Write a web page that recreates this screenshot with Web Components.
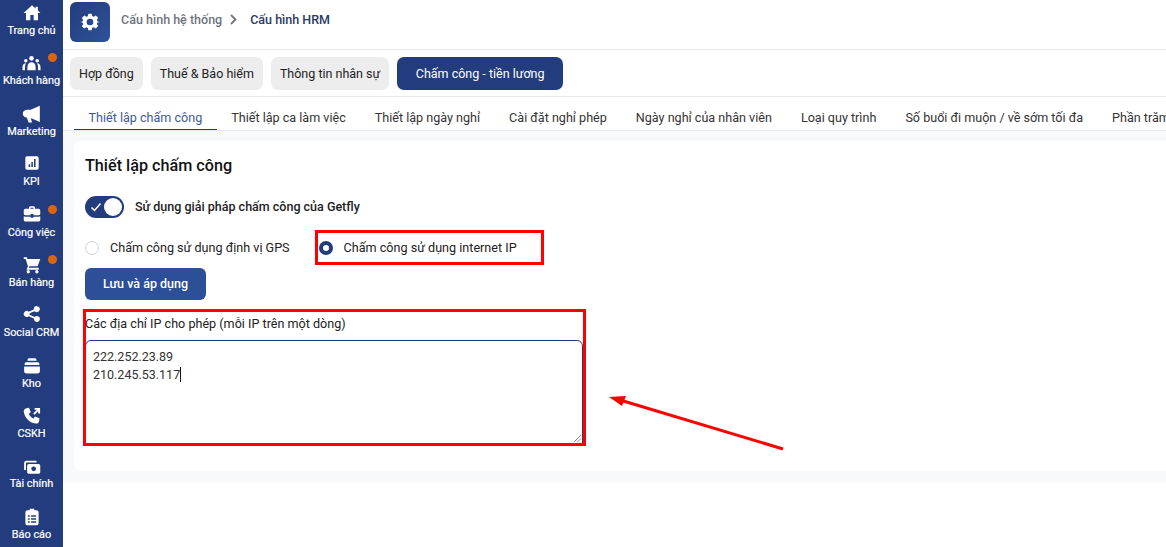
<!DOCTYPE html>
<html lang="vi"><head><meta charset="utf-8"><title>Cấu hình HRM</title>
<style>
html,body{margin:0;padding:0;height:547px;overflow:hidden;background:#fff;font-family:Roboto,"Liberation Sans",sans-serif}
</style></head><body>
<hrm-app></hrm-app>
<script>
const ICONS={
home:'<path d="M12 1.5.8 12h3.2v9.6h5.8v-6.8h4.400v6.8H20V12h3.200L19.800 8.800V3.600h-3v2.400z"/>',
users:'<circle cx="12" cy="5.500" r="2.900"/><circle cx="4.800" cy="8.600" r="2.200"/><circle cx="19.200" cy="8.600" r="2.200"/><path d="M6.800 20.500v-4.200c0-3.600 2.300-6 5.200-6s5.200 2.400 5.200 6v4.200z"/><path d="M5.200 11.600c-1 1.300-1.500 3-1.500 4.800v4H.6v-4c0-2.800 1.800-4.800 4.600-4.800zM18.800 11.600c1 1.300 1.500 3 1.500 4.800v4h3.100v-4c0-2.800-1.800-4.800-4.600-4.800z"/>',
mega:'<path d="M22.500 1v20.500L11 16.500l1.700 5.500H8.300L6 15.800C3 15.500 1 13.500 1 11s2-4.800 5-5h5z"/>',
kpi:'<path fill-rule="evenodd" d="M4.500 2h15A2.500 2.500 0 0 1 22 4.500v15a2.500 2.500 0 0 1-2.500 2.500h-15A2.500 2.500 0 0 1 2 19.500v-15A2.500 2.500 0 0 1 4.500 2zM7 14v4h2.300v-4zm4-3.500V18h2.300v-7.500zM15 6v12h2.300V6z"/>',
job:'<path fill-rule="evenodd" d="M8 5V3.500C8 2.400 8.900 1.500 10 1.500h4c1.100 0 2 .9 2 2V5h4.500C21.900 5 23 6.100 23 7.500V12a2 2 0 0 1-2 1.500h-7V12h-4v1.500H3A2 2 0 0 1 1 12V7.500C1 6.100 2.100 5 3.500 5zm2-1.500V5h4V3.500zM1 15c.6.300 1.300.5 2 .5h7V17h4v-1.500h7c.7 0 1.400-.2 2-.5v4.500c0 1.400-1.100 2.500-2.500 2.500h-17A2.500 2.500 0 0 1 1 19.500z"/>',
cart:'<path d="M1 1.500h4l1 2.500h17l-3.500 9.500H8.500l-1 2.200H21V18.200H4.700l1.900-4.400L3.500 4H1z"/><circle cx="7" cy="21" r="2.200"/><circle cx="18.500" cy="21" r="2.200"/>',
share:'<path d="M18.500 1.500a4 4 0 1 1-3 6.700L8.800 11c.1.600.1 1.300 0 1.900l6.700 3A4 4 0 1 1 14.500 18.500l-.1-.5-6.800-3a4 4 0 1 1 0-6.100l6.800-3v-.4a4 4 0 0 1 4.100-4z"/>',
box:'<path d="M8 1.500h8a2 2 0 0 1 2 2V5H6V3.500a2 2 0 0 1 2-2zM4 7h16c1 0 1.600.8 1.700 1.800l.2 1.700H2.100l.2-1.700C2.400 7.800 3 7 4 7zM1.500 12.500h21V19c0 1.700-1.300 3-3 3h-15c-1.700 0-3-1.300-3-3z"/>',
call:'<path d="M4.500 1.500 8 1l2.400 6-2.600 2c.9 2.800 3.300 5.200 6.200 6.200l2-2.600 6 2.400-.5 3.500c-.3 2-1.800 3.500-3.800 3.500C9 22 2 14.300 1 6.400c-.2-2.300 1.300-4.400 3.500-4.900z"/><path d="M14.500 9.500 21 3M15.500 2.500H21.500V8.500" fill="none" stroke="currentColor" stroke-width="2.600"/>',
money:'<path d="M4.500 3.500h13.500v2.500H5c-.6 0-1 .4-1 1v9H1.500V6.500c0-1.700 1.300-3 3-3z"/><path fill-rule="evenodd" d="M8 8h12.500c1.600 0 2.500 1 2.500 2.500v8c0 1.500-1 2.500-2.500 2.500H8c-1.500 0-2.500-1-2.500-2.500v-8C5.500 9 6.500 8 8 8zm6.200 3.200a3.200 3.200 0 1 0 0 6.400 3.200 3.200 0 0 0 0-6.400z"/>',
report:'<path fill-rule="evenodd" d="M9 1h6v2h3c1.600 0 2.800 1.200 2.800 2.800v14.400c0 1.600-1.200 2.800-2.800 2.800H6c-1.600 0-2.800-1.200-2.800-2.800V5.800C3.200 4.200 4.400 3 6 3h3zM6.500 9.500v2.300h2.400V9.500zm4.300 0v2.300h6.700V9.500zm-4.300 4v2.300h2.400v-2.300zm4.300 0v2.300h6.700v-2.300zm-4.300 4v2.300h2.400v-2.300zm4.300 0v2.300h6.700v-2.300z"/>'
};
function def(name,html){
  customElements.define(name,class extends HTMLElement{
    connectedCallback(){ if(this.shadowRoot)return;
      const r=this.attachShadow({mode:'open'});
      r.innerHTML=typeof html==='function'?html(this):html;
    }
  });
}
def('nav-item',el=>`<style>
:host{display:flex;flex-direction:column;align-items:center;height:50.4px;position:relative;color:#fff;font-size:10.900px;font-weight:400;line-height:13px;white-space:nowrap;-webkit-text-stroke:.2px #fff}
svg{width:var(--s,18px);height:var(--s,18px);fill:currentColor;margin-top:var(--t,5px);flex:none}
span{position:absolute;top:var(--l,24px);left:0;right:0;text-align:center}
i{position:absolute;left:48px;top:3px;width:9px;height:9px;border-radius:50%;background:#d9650f}
</style><svg viewBox="0 0 24 24">${ICONS[el.getAttribute('icon')]}</svg><span><slot></slot></span>${el.hasAttribute('dot')?'<i></i>':''}`);

def('side-nav',`<style>
:host{display:block;width:63px;height:547px;background:#233c7e;flex:none;box-sizing:border-box}
</style><slot></slot>`);

def('app-header',`<style>
:host{display:flex;align-items:flex-start;height:49px;box-sizing:border-box;padding:2px 0 0 7px;font-size:12.500px;font-weight:500;color:#6e7480}
.tile{width:40px;height:40px;border-radius:6px;background:linear-gradient(135deg,#233c7e,#2f5299);display:flex;align-items:center;justify-content:center;margin-right:11px}
.crumb{display:flex;align-items:center;height:34px}
svg.g{width:20px;height:20px;fill:#fff}
svg.c{width:9px;height:11px;margin:0 12px 0 7px;fill:none;stroke:#6e7480;stroke-width:1.800}
b{font-weight:500;color:#2a3a63}
</style><div class="tile"><svg class="g" viewBox="0 0 24 24"><path fill-rule="evenodd" d="M10 2h4l.6 2.900 1.800.8 2.500-1.600 2.900 2.900-1.600 2.500.8 1.800L23.900 12l-2.900.6-.8 1.800 1.600 2.500-2.900 2.900-2.500-1.600-1.800.8L14 22h-4l-.6-2.900-1.800-.8-2.500 1.600-2.900-2.900 1.600-2.500-.8-1.800L.1 12l2.900-.6.800-1.800-1.600-2.500 2.900-2.900 2.500 1.600 1.800-.8zm2 6a4 4 0 1 0 0 8 4 4 0 0 0 0-8z"/></svg></div><div class="crumb"><span>Cấu hình hệ thống</span><svg class="c" viewBox="0 0 9 11"><path d="M2 1l4.500 4.500L2 10"/></svg><b>Cấu hình HRM</b></div>`);

def('pill-tabs',`<style>
:host{display:flex;gap:8px;height:48px;box-sizing:border-box;padding:7px 0 0 7px;border-top:1px solid #e8e9ec;border-bottom:1px solid #e8e9ec}
</style><slot></slot>`);
def('pill-tab',`<style>
:host{display:flex;align-items:center;height:33px;box-sizing:border-box;padding:0 9px;border-radius:7px;background:#ededed;color:#222;font-size:12.500px;white-space:nowrap}
:host([on]){background:#233c7e;color:#fff;padding:0 18.500px;margin-left:0}
</style><slot></slot>`);

def('sub-tabs',`<style>
:host{display:flex;height:34px;box-sizing:border-box;padding-left:11px;border-bottom:1px solid #e7e9ee;overflow:hidden;white-space:nowrap}
</style><slot></slot>`);
def('sub-tab',`<style>
:host{display:block;flex:none;height:34px;box-sizing:border-box;padding:13px 14.500px 0;font-size:12.580px;line-height:16px;color:#333}
:host([on]){color:#3f5a93;border-bottom:2px solid #233c7e}
</style><slot></slot>`);

def('form-card',`<style>
:host{display:block;background:#fff;margin:10px 0 0 11px;height:330px;box-sizing:border-box;padding:15px 11px 0;border-radius:7px 0 0 7px;position:relative}
</style><slot></slot>`);
def('card-title',`<style>:host{display:block;font-size:16.200px;font-weight:500;line-height:19px;color:#111}</style><slot></slot>`);
def('toggle-row',`<style>
:host{display:flex;align-items:center;margin-top:21px;height:22px;font-size:12.500px;font-weight:500;color:#222;gap:11px}
.t{width:39px;height:22px;border-radius:11px;background:#233c7e;position:relative;flex:none}
.k{position:absolute;right:2px;top:2px;width:18px;height:18px;border-radius:50%;background:#fff}
svg{position:absolute;left:5px;top:6px;width:12px;height:10px;fill:none;stroke:#fff;stroke-width:1.500}
.l{margin-top:-2px}
</style><div class="t"><svg viewBox="0 0 12 10"><path d="M1.500 5.500 4.500 8.500 10.500 1.500"/></svg><div class="k"></div></div><div class="l"><slot></slot></div>`);
def('radio-row',`<style>:host{display:flex;align-items:center;height:35px;margin-top:12px}
::slotted(radio-opt:first-child){margin-right:29px}</style><slot></slot>`);
def('radio-opt',`<style>
:host{display:flex;align-items:center;gap:11px;font-size:12.600px;color:#222;white-space:nowrap}
.r{width:14px;height:14px;border-radius:50%;box-sizing:border-box;border:1px solid #ccd0d6;background:#fff;flex:none}
:host([on]) .r{border:4px solid #233c7e}
</style><div class="r"></div><slot></slot>`);
def('save-btn',`<style>
:host{display:flex;align-items:center;justify-content:center;width:121px;height:32px;box-sizing:border-box;padding-bottom:2px;margin-top:3px;border-radius:6px;background:#2d4f97;color:#fff;font-size:12.500px;font-weight:500}
</style><slot></slot>`);
def('ip-field',`<style>
:host{display:block;margin-top:16px;position:relative}
label{display:block;font-size:12.600px;line-height:16px;color:#222;margin-bottom:8px}
.ta{width:498px;height:105px;box-sizing:border-box;border:1px solid #233c7e;border-radius:6px 6px 0 0;padding:7px 7px;font-size:12.500px;line-height:18px;color:#333;position:relative;overflow:hidden}
.caret{display:inline-block;width:1px;height:15px;background:#111;vertical-align:-3px}
svg{position:absolute;right:1px;bottom:2px;width:7px;height:7px;stroke:#777;fill:none;stroke-width:.8}
</style><label><slot></slot></label><div class="ta">222.252.23.89<br>210.245.53.117<span class="caret"></span><svg viewBox="0 0 7 7"><path d="M0 7 7 0M3.500 7 7 3.500"/></svg></div>`);

def('red-marks',`<style>
:host{position:absolute;left:0;top:0;width:1166px;height:547px;pointer-events:none;display:block}
svg{position:absolute;left:0;top:0}
</style><svg width="1166" height="547" viewBox="0 0 1166 547" fill="none">
<rect x="316.500" y="231.500" width="226" height="32" stroke="#f00" stroke-width="3"/>
<rect x="84.500" y="310.500" width="500" height="134" stroke="#f00" stroke-width="3"/>
<path d="M783 449 620 400" stroke="#f00" stroke-width="3"/>
<path d="M609 397 626 396 622 406z" fill="#f00"/></svg>`);

def('hrm-app',`<style>
:host{display:flex;width:1166px;height:547px;position:relative;overflow:hidden;color:#222}
main{flex:1;min-width:0;display:block}
.bg{background:#f8f9fb;height:351px;overflow:hidden}
</style>
<side-nav>
<nav-item icon="home" style="--s:18px;--t:4px">Trang chủ</nav-item>
<nav-item icon="users" dot style="--s:19px;--t:4px">Khách hàng</nav-item>
<nav-item icon="mega" style="--s:19px;--t:4px">Marketing</nav-item>
<nav-item icon="kpi" style="--s:16px;--t:4px">KPI</nav-item>
<nav-item icon="job" dot style="--s:18px;--t:3px">Công việc</nav-item>
<nav-item icon="cart" dot style="--s:18px;--t:4px">Bán hàng</nav-item>
<nav-item icon="share" style="--s:18px;--t:3px">Social CRM</nav-item>
<nav-item icon="box" style="--s:18px;--t:4px">Kho</nav-item>
<nav-item icon="call" style="--s:18px;--t:4px">CSKH</nav-item>
<nav-item icon="money" style="--s:18px;--t:4px;--l:23px">Tài chính</nav-item>
<nav-item icon="report" style="--s:18px;--t:4px">Báo cáo</nav-item>
</side-nav>
<main>
<app-header></app-header>
<pill-tabs>
<pill-tab>Hợp đồng</pill-tab><pill-tab>Thuế &amp; Bảo hiểm</pill-tab><pill-tab>Thông tin nhân sự</pill-tab><pill-tab on>Chấm công - tiền lương</pill-tab>
</pill-tabs>
<sub-tabs>
<sub-tab on>Thiết lập chấm công</sub-tab><sub-tab>Thiết lập ca làm việc</sub-tab><sub-tab>Thiết lập ngày nghỉ</sub-tab><sub-tab>Cài đặt nghỉ phép</sub-tab><sub-tab>Ngày nghỉ của nhân viên</sub-tab><sub-tab>Loại quy trình</sub-tab><sub-tab>Số buổi đi muộn / về sớm tối đa</sub-tab><sub-tab>Phần trăm</sub-tab>
</sub-tabs>
<div class="bg"><form-card>
<card-title>Thiết lập chấm công</card-title>
<toggle-row>Sử dụng giải pháp chấm công của Getfly</toggle-row>
<radio-row><radio-opt>Chấm công sử dụng định vị GPS</radio-opt><radio-opt on>Chấm công sử dụng internet IP</radio-opt></radio-row>
<save-btn>Lưu và áp dụng</save-btn>
<ip-field>Các địa chỉ IP cho phép (mỗi IP trên một dòng)</ip-field>
</form-card></div>
</main>
<red-marks></red-marks>`);
</script>
</body></html>
